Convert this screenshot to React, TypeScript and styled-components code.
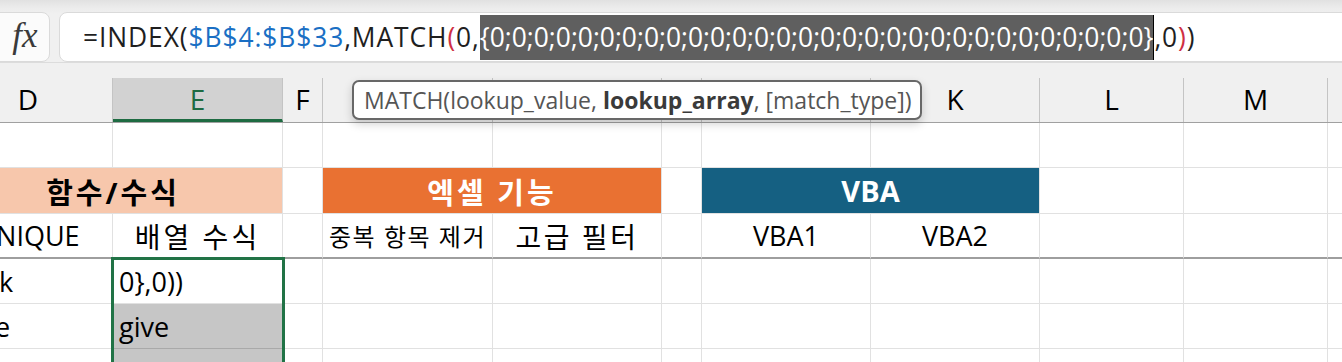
import styled, { createGlobalStyle } from "styled-components";

const GlobalStyle = createGlobalStyle`
  html, body {
    margin: 0;
    padding: 0;
    background: #ffffff;
    overflow: hidden;
  }
  body {
    font-family: "Open Sans", "Noto Sans CJK KR", sans-serif;
  }
`;

const Page = styled.div`
  position: relative;
  width: 1342px;
  height: 362px;
  overflow: hidden;
`;

const FormulaArea = styled.div`
  display: flex;
  height: 62px;
  box-sizing: border-box;
  padding-top: 12px;
  background: linear-gradient(#e1e1e1 0px, #ececec 8px, #f0f0f0 14px);
`;

const FxBox = styled.div`
  width: 60px;
  height: 50px;
  margin-left: -10px;
  box-sizing: border-box;
  border: 1px solid #dadada;
  border-radius: 8px;
  background: #fbfbfb;
  display: flex;
  align-items: center;
  justify-content: center;
  padding-left: 10px;
  padding-bottom: 2px;
  font-family: "Liberation Serif", serif;
  font-style: italic;
  font-size: 35px;
  color: #3a3a3a;
`;

const FormulaBox = styled.div`
  flex: 1;
  height: 50px;
  margin-left: 9px;
  margin-right: -20px;
  box-sizing: border-box;
  border: 1px solid #dadada;
  border-radius: 8px;
  background: #ffffff;
  display: flex;
  align-items: center;
  padding-left: 23px;
  font-size: 26.4px;
  line-height: 45px;
  color: #1f1f1f;
  white-space: nowrap;
`;

const Token = styled.span<{ $color?: string }>`
  color: ${(p) => p.$color || "#1f1f1f"};
  letter-spacing: 0.9px;
`;

const Highlight = styled.span`
  background: #5f5f5f;
  color: #ffffff;
  display: inline-block;
  height: 45px;
`;

const Caret = styled.span`
  display: inline-block;
  width: 1px;
  height: 45px;
  background: #000000;
  vertical-align: top;
`;

const HeaderStrip = styled.div`
  background: #f0f0f0;
  padding-top: 15px;
  border-top: 1px solid #dcdcdc;
  box-sizing: border-box;
`;

const COLS = "169px 170px 40px 170px 169px 40px 169px 169px 144px 144px 144px";

const HeaderRow = styled.div`
  display: grid;
  grid-template-columns: ${COLS};
  margin-left: -56px;
  height: 44px;
  border-bottom: 1px solid #a0a0a0;
`;

const HeaderCell = styled.div<{ $active?: boolean }>`
  box-sizing: border-box;
  display: flex;
  align-items: center;
  justify-content: center;
  font-size: 28px;
  border-right: 1px solid #c4c4c4;
  color: ${(p) => (p.$active ? "#1e6b42" : "#000000")};
  background: ${(p) => (p.$active ? "#d2d2d2" : "transparent")};
  border-bottom: ${(p) => (p.$active ? "3px solid #1e6b42" : "none")};
  padding-top: ${(p) => (p.$active ? "1px" : "0")};
  padding-bottom: ${(p) => (p.$active ? "0" : "2px")};
`;

const Sheet = styled.div`
  position: relative;
  display: grid;
  grid-template-columns: ${COLS};
  grid-template-rows: 45px 46px 45px 45px 45px 45px;
  margin-left: -56px;
`;

const Cell = styled.div<{
  $align?: string;
  $size?: number;
  $spacing?: number;
  $fill?: string;
  $thick?: boolean;
  $line?: string;
}>`
  box-sizing: border-box;
  display: flex;
  align-items: center;
  justify-content: ${(p) => p.$align || "flex-start"};
  padding: 0 6px;
  font-size: ${(p) => p.$size || 27}px;
  letter-spacing: ${(p) => p.$spacing || 0}px;
  color: #000000;
  white-space: nowrap;
  overflow: visible;
  background: ${(p) => p.$fill || "#ffffff"};
  border-right: 1px solid #e1e1e1;
  border-bottom: ${(p) => (p.$thick ? "2px solid #9e9e9e" : `1px solid ${p.$line || "#e1e1e1"}`)};
`;

const Merged = styled.div<{ $span: number; $bg: string; $color: string; $spacing?: number }>`
  grid-column: span ${(p) => p.$span};
  box-sizing: border-box;
  display: flex;
  align-items: center;
  justify-content: center;
  background: ${(p) => p.$bg};
  color: ${(p) => p.$color};
  font-size: 29px;
  letter-spacing: ${(p) => p.$spacing || 0}px;
  font-weight: 700;
  border-bottom: 1px solid #e1e1e1;
  border-right: 1px solid #e1e1e1;
`;

const SelectionFrame = styled.div`
  position: absolute;
  left: 167px;
  top: 134px;
  width: 174px;
  height: 120px;
  box-sizing: border-box;
  border: 3px solid #217346;
  pointer-events: none;
`;

const Tooltip = styled.div`
  position: absolute;
  left: 352px;
  top: 80px;
  width: 570px;
  height: 40px;
  box-sizing: border-box;
  border: 2px solid #686868;
  border-radius: 7px;
  background: #ffffff;
  box-shadow: 0 4px 10px rgba(0, 0, 0, 0.18);
  display: flex;
  align-items: center;
  padding-left: 10px;
  font-size: 23px;
  color: #555555;
  white-space: nowrap;
`;

const Strong = styled.b`
  color: #3a3a3a;
  font-weight: 700;
`;

const columns = ["D", "E", "F", "G", "H", "I", "J", "K", "L", "M", "N"];
const zeros = "{" + Array(30).fill("0").join(";") + "}";
const editTail = "0},0))";

function App() {
  return (
    <Page>
      <GlobalStyle />
      <FormulaArea>
        <FxBox>fx</FxBox>
        <FormulaBox>
          <Token>=INDEX(</Token>
          <Token $color="#1a6fc4">$B$4:$B$33</Token>
          <Token>,MATCH</Token>
          <Token $color="#cf2f43">(</Token>
          <Token>0,</Token>
          <Highlight>{zeros}</Highlight>
          <Caret />
          <Token>,0</Token>
          <Token $color="#cf2f43">)</Token>
          <Token>)</Token>
        </FormulaBox>
      </FormulaArea>

      <HeaderStrip>
        <HeaderRow>
          {columns.map((c) => (
            <HeaderCell key={c} $active={c === "E"}>
              {c}
            </HeaderCell>
          ))}
        </HeaderRow>
      </HeaderStrip>

      <Sheet>
        {/* row 1 */}
        {columns.map((c) => (
          <Cell key={"r1" + c} />
        ))}

        {/* row 2 */}
        <Merged $span={2} $bg="#f7c7ac" $color="#000000" $spacing={3}>함수/수식</Merged>
        <Cell />
        <Merged $span={2} $bg="#e97132" $color="#ffffff" $spacing={3}>엑셀 기능</Merged>
        <Cell />
        <Merged $span={2} $bg="#156082" $color="#ffffff">VBA</Merged>
        <Cell />
        <Cell />
        <Cell />

        {/* row 3 */}
        <Cell $thick $align="center">UNIQUE</Cell>
        <Cell $thick $align="center" $size={28} $spacing={3}>배열 수식</Cell>
        <Cell $thick />
        <Cell $thick $align="center" $size={24} $spacing={1.5}>중복 항목 제거</Cell>
        <Cell $thick $align="center" $size={28} $spacing={2.5}>고급 필터</Cell>
        <Cell $thick />
        <Cell $thick $align="center">VBA1</Cell>
        <Cell $thick $align="center">VBA2</Cell>
        <Cell $thick />
        <Cell $thick />
        <Cell $thick />

        {/* row 4 */}
        <Cell>book</Cell>
        <Cell>{editTail}</Cell>
        {columns.slice(2).map((c) => (
          <Cell key={"r4" + c} />
        ))}

        {/* row 5 */}
        <Cell>have</Cell>
        <Cell $fill="#c6c6c6" $line="#a9a9a9">give</Cell>
        {columns.slice(2).map((c) => (
          <Cell key={"r5" + c} />
        ))}

        {/* row 6 */}
        <Cell />
        <Cell $fill="#c6c6c6" $line="#a9a9a9" />
        {columns.slice(2).map((c) => (
          <Cell key={"r6" + c} />
        ))}

        <SelectionFrame />
      </Sheet>

      <Tooltip>
        MATCH(lookup_value,&nbsp;<Strong>lookup_array</Strong>, [match_type])
      </Tooltip>
    </Page>
  );
}

export default App;
